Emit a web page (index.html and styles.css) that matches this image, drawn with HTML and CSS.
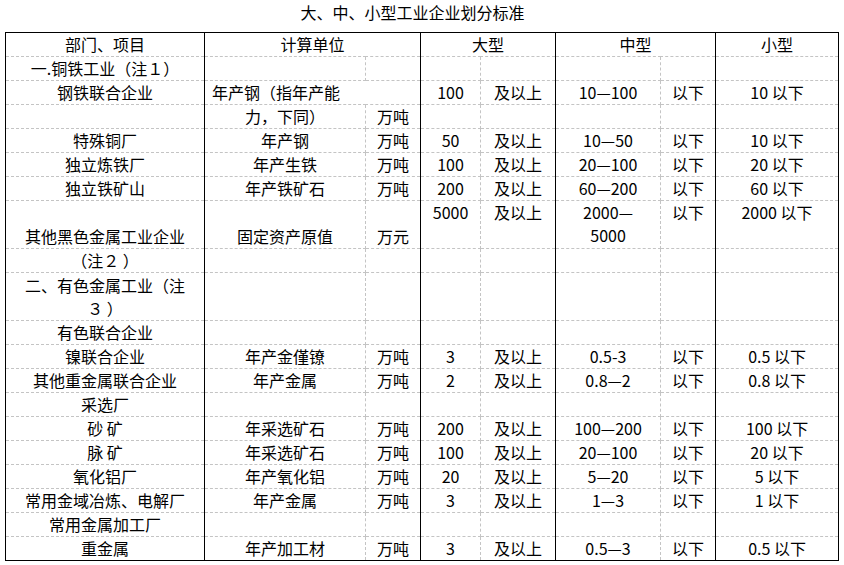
FILE: index.html
```html
<!DOCTYPE html>
<html lang="zh-CN">
<head>
<meta charset="utf-8">
<title>大、中、小型工业企业划分标准</title>
<link rel="stylesheet" href="styles.css">
</head>
<body>
<h1 class="title">大、中、小型工业企业划分标准</h1>
<table class="grid">
  <colgroup class="g"><col class="c1"></colgroup>
  <colgroup class="g"><col class="c2"><col class="c3"></colgroup>
  <colgroup class="g"><col class="c4"><col class="c5"></colgroup>
  <colgroup class="g"><col class="c6"><col class="c7"></colgroup>
  <colgroup class="g"><col class="c8"></colgroup>
  <thead>
    <tr><th>部门、项目</th><th colspan="2">计算单位</th><th colspan="2">大型</th><th colspan="2">中型</th><th>小型</th></tr>
  </thead>
  <tbody>
    <tr><td>一.铜铁工业（注１）</td><td></td><td></td><td></td><td></td><td></td><td></td><td></td></tr>
    <tr><td>钢铁联合企业</td><td colspan="2" class="left">年产钢（指年产能</td><td>100</td><td>及以上</td><td>10—100</td><td>以下</td><td>10 以下</td></tr>
    <tr><td></td><td>力，下同）</td><td>万吨</td><td></td><td></td><td></td><td></td><td></td></tr>
    <tr><td>特殊铜厂</td><td>年产钢</td><td>万吨</td><td>50</td><td>及以上</td><td>10—50</td><td>以下</td><td>10 以下</td></tr>
    <tr><td>独立炼铁厂</td><td>年产生铁</td><td>万吨</td><td>100</td><td>及以上</td><td>20—100</td><td>以下</td><td>20 以下</td></tr>
    <tr><td>独立铁矿山</td><td>年产铁矿石</td><td>万吨</td><td>200</td><td>及以上</td><td>60—200</td><td>以下</td><td>60 以下</td></tr>
    <tr class="tall"><td class="bot">其他黑色金属工业企业</td><td class="bot">固定资产原值</td><td class="bot">万元</td><td class="top">5000</td><td class="top">及以上</td><td class="top">2000—<br>5000</td><td class="top">以下</td><td class="top">2000 以下</td></tr>
    <tr><td>（注２ ）</td><td></td><td></td><td></td><td></td><td></td><td></td><td></td></tr>
    <tr class="tall"><td>二、有色金属工业（注<br>３ ）</td><td></td><td></td><td></td><td></td><td></td><td></td><td></td></tr>
    <tr><td>有色联合企业</td><td></td><td></td><td></td><td></td><td></td><td></td><td></td></tr>
    <tr><td>镍联合企业</td><td>年产金僅镣</td><td>万吨</td><td>3</td><td>及以上</td><td>0.5-3</td><td>以下</td><td>0.5 以下</td></tr>
    <tr><td>其他重金属联合企业</td><td>年产金属</td><td>万吨</td><td>2</td><td>及以上</td><td>0.8—2</td><td>以下</td><td>0.8 以下</td></tr>
    <tr><td>采选厂</td><td></td><td></td><td></td><td></td><td></td><td></td><td></td></tr>
    <tr><td>砂 矿</td><td>年采选矿石</td><td>万吨</td><td>200</td><td>及以上</td><td>100—200</td><td>以下</td><td>100 以下</td></tr>
    <tr><td>脉 矿</td><td>年采选矿石</td><td>万吨</td><td>100</td><td>及以上</td><td>20—100</td><td>以下</td><td>20 以下</td></tr>
    <tr><td>氧化铝厂</td><td>年产氧化铝</td><td>万吨</td><td>20</td><td>及以上</td><td>5—20</td><td>以下</td><td>5 以下</td></tr>
    <tr><td>常用金域冶炼、电解厂</td><td>年产金属</td><td>万吨</td><td>3</td><td>及以上</td><td>1—3</td><td>以下</td><td>1 以下</td></tr>
    <tr><td>常用金属加工厂</td><td></td><td></td><td></td><td></td><td></td><td></td><td></td></tr>
    <tr><td>重金属</td><td>年产加工材</td><td>万吨</td><td>3</td><td>及以上</td><td>0.5—3</td><td>以下</td><td>0.5 以下</td></tr>
  </tbody>
</table>
</body>
</html>
```

FILE: styles.css
```css
html, body {
  margin: 0;
  padding: 0;
  background: #ffffff;
}

body {
  font-family: "Noto Sans CJK SC", "Noto Sans", sans-serif;
  font-size: 16px;
  color: #000000;
}

.title {
  margin: 0;
  padding: 0 19px 8px 0;
  font-size: 16px;
  font-weight: normal;
  line-height: 24px;
  text-align: center;
}

.grid {
  margin-left: 5px;
  border-collapse: collapse;
  table-layout: fixed;
  width: 834px;
  border: 1px solid #000000;
}

.g {
  border-left: 1px solid #000000;
  border-right: 1px solid #000000;
}

.c1 { width: 199px; }
.c2 { width: 161px; }
.c3 { width: 55px; }
.c4 { width: 60px; }
.c5 { width: 75px; }
.c6 { width: 105px; }
.c7 { width: 55px; }
.c8 { width: 123px; }

.grid th,
.grid td {
  border: 1px dashed #c4c4c4;
  padding: 0;
  height: 23px;
  line-height: 23px;
  font-weight: normal;
  text-align: center;
  vertical-align: middle;
  white-space: nowrap;
  overflow: hidden;
}

.grid tr.tall td {
  height: 47px;
  line-height: 23px;
}

.grid td.left {
  text-align: left;
  padding-left: 7px;
}

.grid td.top {
  vertical-align: top;
}

.grid td.bot {
  vertical-align: bottom;
}
```
